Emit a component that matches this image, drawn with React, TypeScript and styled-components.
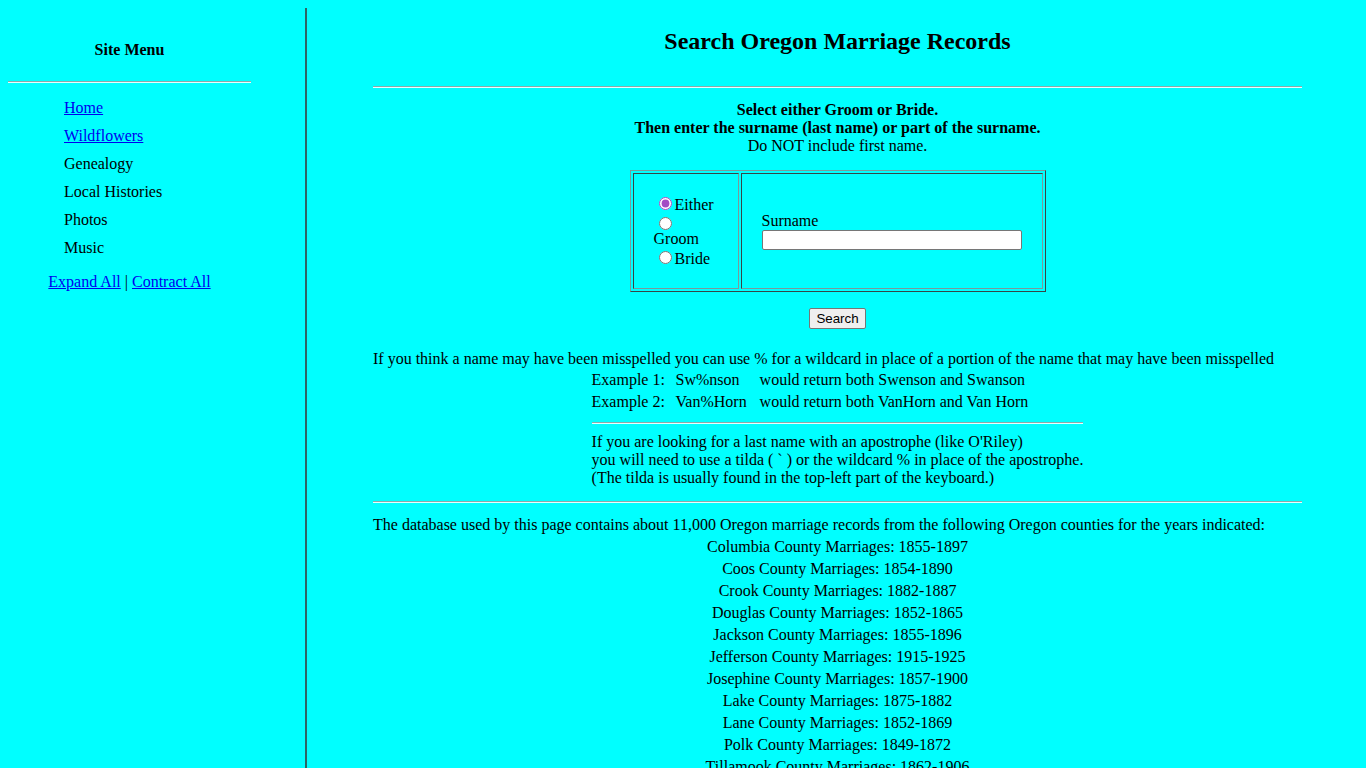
import React from "react";
import styled, { createGlobalStyle } from "styled-components";

const GlobalStyle = createGlobalStyle`
  html, body {
    background: #00ffff;
  }
  body {
    margin: 8px 0 0 8px;
    font-family: "Liberation Serif", "Times New Roman", serif;
    font-size: 16px;
    color: #000;
  }
`;

const Page = styled.div`
  display: flex;
  align-items: stretch;
  min-height: calc(100vh - 8px);
`;

const Sidebar = styled.nav`
  width: 297px;
  flex: none;
  border-right: 2px solid #2f6464;
`;

const SideInner = styled.div`
  width: 243px;
`;

const MenuTitle = styled.div`
  margin-top: 33px;
  font-weight: bold;
  text-align: center;
  line-height: 18px;
`;

const Rule = styled.hr<{ $top?: number; $bottom?: number }>`
  border: none;
  border-top: 1px solid #8fa8a8;
  border-bottom: 1px solid #e6ffff;
  height: 0;
  margin: ${(p) => p.$top ?? 8}px 0 ${(p) => p.$bottom ?? 8}px;
`;

const MenuList = styled.ul`
  list-style: none;
  margin: 11px 0 0;
  padding: 0 0 0 56px;
`;

const MenuItem = styled.li`
  line-height: 28px;
`;

const Link = styled.a`
  color: #0000ee;
  text-decoration: underline;
  cursor: pointer;
`;

const ExpandRow = styled.div`
  margin-top: 6px;
  line-height: 28px;
  text-align: center;
`;

const Main = styled.main`
  flex: 1;
  padding: 0 64px 0 66px;
`;

const Title = styled.h2`
  margin: 19px 0 0;
  font-size: 24px;
  line-height: 28px;
  text-align: center;
`;

const Instructions = styled.div`
  margin-top: 13px;
  text-align: center;
  line-height: 18px;
`;

const Strong = styled.div`
  font-weight: bold;
`;

const SearchTable = styled.table`
  margin: 15px auto 0;
  border: 1px outset #7a9a9a;
  border-spacing: 2px;
`;

const Cell = styled.td<{ $narrow?: boolean }>`
  border: 1px inset #7a9a9a;
  vertical-align: middle;
  padding: ${(p) => (p.$narrow ? "20px 21px 20px 20px" : "20px")};
  width: ${(p) => (p.$narrow ? "63px" : "260px")};
  line-height: 18px;
`;

const Radio = styled.input.attrs({ type: "radio", name: "who" })`
  margin: 3px 3px 0 5px;
  accent-color: #a24cc4;
`;

/* the label that drops below its radio button when the column is too narrow */
const WrappedLabel = styled.span`
  display: block;
  margin-top: -4px;
`;

const FieldLabel = styled.div`
  line-height: 18px;
`;

const TextInput = styled.input.attrs({ type: "text" })`
  box-sizing: border-box;
  display: block;
  width: 260px;
  height: 20px;
  margin: 0;
  font-size: 13.333px;
  font-family: "Liberation Sans", Arial, sans-serif;
  background: #fff;
  border: 1px solid #767676;
  border-radius: 2px;
`;

const ButtonRow = styled.div`
  margin-top: 16px;
  text-align: center;
`;

const Button = styled.button`
  font-family: "Liberation Sans", Arial, sans-serif;
  font-size: 13.333px;
  height: 21px;
  padding: 1px 6px;
  background: #efefef;
  border: 1px solid #767676;
  border-radius: 2px;
  color: #000;
`;

const Para = styled.p`
  margin: 21px 0 0;
  line-height: 18px;
`;

const HelpBlock = styled.div`
  width: fit-content;
  margin: 1px auto 0;
`;

const ExampleGrid = styled.div`
  display: grid;
  grid-template-columns: 84px 84px auto;
  line-height: 22px;
`;

const HelpText = styled.div`
  line-height: 18px;
`;

const DbIntro = styled.p`
  margin: 0;
  line-height: 22px;
`;

const CountyList = styled.ul`
  list-style: none;
  margin: 0;
  padding: 0;
  text-align: center;
`;

const County = styled.li`
  line-height: 22px;
`;

const menu: { label: string; link?: boolean }[] = [
  { label: "Home", link: true },
  { label: "Wildflowers", link: true },
  { label: "Genealogy" },
  { label: "Local Histories" },
  { label: "Photos" },
  { label: "Music" },
];

const counties: [string, string][] = [
  ["Columbia", "1855-1897"],
  ["Coos", "1854-1890"],
  ["Crook", "1882-1887"],
  ["Douglas", "1852-1865"],
  ["Jackson", "1855-1896"],
  ["Jefferson", "1915-1925"],
  ["Josephine", "1857-1900"],
  ["Lake", "1875-1882"],
  ["Lane", "1852-1869"],
  ["Polk", "1849-1872"],
  ["Tillamook", "1862-1906"],
];

export default function App() {
  return (
    <>
      <GlobalStyle />
      <Page>
        <Sidebar>
          <SideInner>
            <MenuTitle>Site Menu</MenuTitle>
            <Rule $top={22} $bottom={0} />
            <MenuList>
              {menu.map((m) => (
                <MenuItem key={m.label}>
                  {m.link ? <Link>{m.label}</Link> : m.label}
                </MenuItem>
              ))}
            </MenuList>
            <ExpandRow>
              <Link>Expand All</Link> | <Link>Contract All</Link>
            </ExpandRow>
          </SideInner>
        </Sidebar>
        <Main>
          <Title>Search Oregon Marriage Records</Title>
          <Rule $top={31} $bottom={0} />
          <Instructions>
            <Strong>Select either Groom or Bride.</Strong>
            <Strong>Then enter the surname (last name) or part of the surname.</Strong>
            <div>Do NOT include first name.</div>
          </Instructions>
          <SearchTable>
            <tbody>
              <tr>
                <Cell $narrow>
                  <Radio defaultChecked />Either<br />
                  <Radio />
                  <WrappedLabel>Groom</WrappedLabel>
                  <Radio />Bride
                </Cell>
                <Cell>
                  <FieldLabel>Surname</FieldLabel>
                  <TextInput />
                </Cell>
              </tr>
            </tbody>
          </SearchTable>
          <ButtonRow>
            <Button>Search</Button>
          </ButtonRow>
          <Para>
            If you think a name may have been misspelled you can use % for a wildcard in place of a
            portion of the name that may have been misspelled
          </Para>
          <HelpBlock>
            <ExampleGrid>
              <span>Example 1:</span>
              <span>Sw%nson</span>
              <span>would return both Swenson and Swanson</span>
              <span>Example 2:</span>
              <span>Van%Horn</span>
              <span>would return both VanHorn and Van Horn</span>
            </ExampleGrid>
            <Rule $top={9} $bottom={9} />
            <HelpText>
              If you are looking for a last name with an apostrophe (like O'Riley)
              <br />
              you will need to use a tilda ( ` ) or the wildcard % in place of the apostrophe.
              <br />
              (The tilda is usually found in the top-left part of the keyboard.)
            </HelpText>
          </HelpBlock>
          <Rule $top={14} $bottom={11} />
          <DbIntro>
            The database used by this page contains about 11,000 Oregon marriage records from the
            following Oregon counties for the years indicated:
          </DbIntro>
          <CountyList>
            {counties.map(([name, years]) => (
              <County key={name}>
                {name} County Marriages: {years}
              </County>
            ))}
          </CountyList>
        </Main>
      </Page>
    </>
  );
}
